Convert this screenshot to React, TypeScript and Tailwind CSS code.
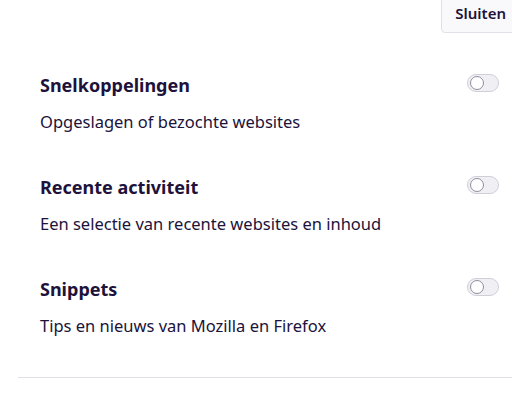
import { useState } from "react"

const sections = [
  { title: "Snelkoppelingen", desc: "Opgeslagen of bezochte websites" },
  { title: "Recente activiteit", desc: "Een selectie van recente websites en inhoud" },
  { title: "Snippets", desc: "Tips en nieuws van Mozilla en Firefox" },
]

function Toggle() {
  const [on, setOn] = useState(false)
  return (
    <button
      onClick={() => setOn(!on)}
      className="flex h-[18px] w-[32px] shrink-0 items-center rounded-full border border-[#cfcfd8] bg-[#f0f0f4] px-[2px]"
    >
      <span className="h-[14px] w-[14px] rounded-full border border-[#8f8f9d] bg-white" />
    </button>
  )
}

export default function App() {
  return (
    <div className="h-[411px] w-[512px] overflow-hidden bg-white text-[#20123a]" style={{ fontFamily: '"Noto Sans", sans-serif' }}>
      <div className="flex justify-end">
        <button className="-mr-[8px] -mt-[7px] h-[40px] rounded-[4px] border border-[#e0e0e6] bg-[#f9f9fb] px-[13px] pt-[1px] text-[15px] font-semibold">
          Sluiten
        </button>
      </div>
      <div className="mt-[40px] flex flex-col gap-[42px] pl-[40px] pr-[13px]">
        {sections.map((s) => (
          <div key={s.title} className="flex items-start justify-between">
            <div>
              <h2 className="text-[18px] font-bold leading-[24px]">{s.title}</h2>
              <p className="mt-[14px] text-[16.5px] leading-[22px]">{s.desc}</p>
            </div>
            <div className="pt-[1px]">
              <Toggle />
            </div>
          </div>
        ))}
      </div>
      <div className="ml-[18px] mt-[40px] border-t border-[#e0e0e6]" />
    </div>
  )
}
